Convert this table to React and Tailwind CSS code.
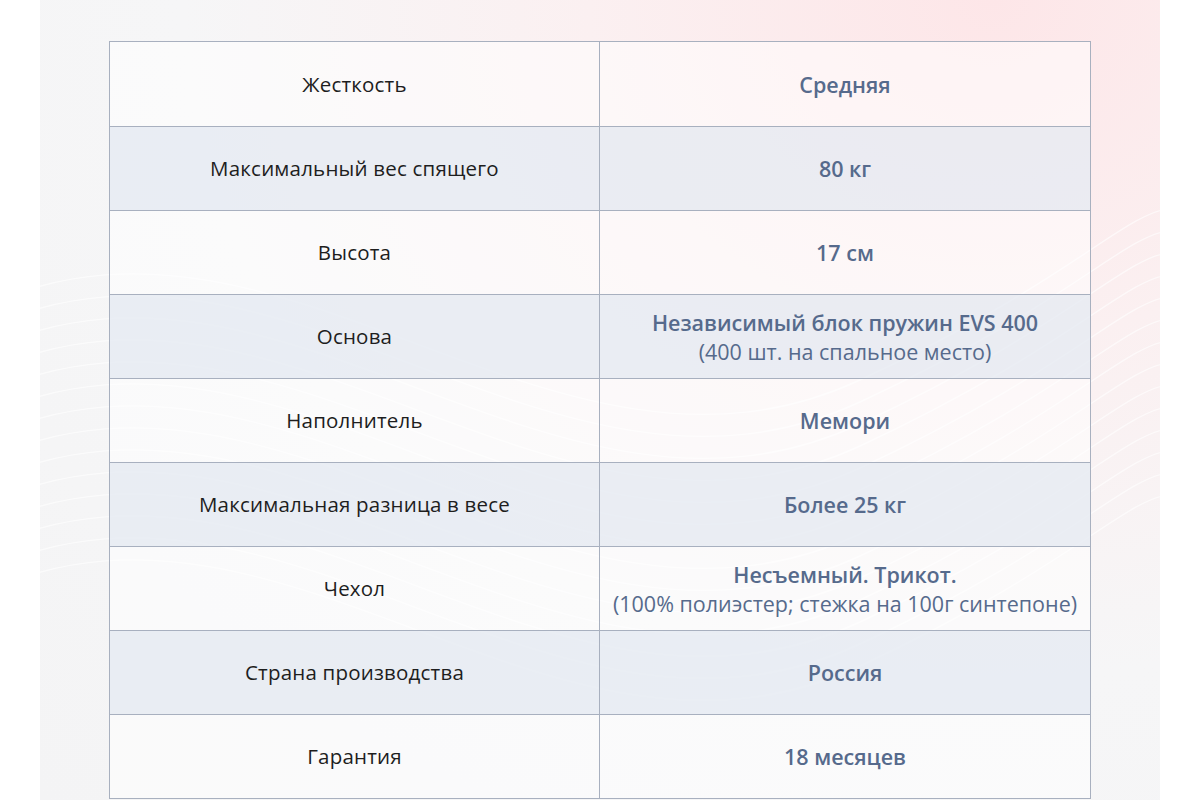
import React from 'react';

const rows = [
  { label: 'Жесткость', value: 'Средняя' },
  { label: 'Максимальный вес спящего', value: '80 кг' },
  { label: 'Высота', value: '17 см' },
  { label: 'Основа', value: 'Независимый блок пружин EVS 400', note: '(400 шт. на спальное место)' },
  { label: 'Наполнитель', value: 'Мемори' },
  { label: 'Максимальная разница в весе', value: 'Более 25 кг' },
  { label: 'Чехол', value: 'Несъемный. Трикот.', note: '(100% полиэстер; стежка на 100г синтепоне)' },
  { label: 'Страна производства', value: 'Россия' },
  { label: 'Гарантия', value: '18 месяцев' },
];

function Waves() {
  const lines = [];
  for (let i = 0; i < 14; i++) {
    const o = i * 22;
    lines.push(
      <path
        key={i}
        d={`M -40 ${300 + o} C 250 ${180 + o}, 520 ${520 + o}, 820 ${380 + o} S 1100 ${160 + o}, 1200 ${240 + o}`}
        fill="none"
        stroke="#ffffff"
        strokeWidth="1.4"
        strokeOpacity="0.6"
      />
    );
  }
  return (
    <svg className="absolute inset-0 w-full h-full" viewBox="0 0 1120 800" preserveAspectRatio="none">
      {lines}
    </svg>
  );
}

function App() {
  return (
    <div className="w-full h-[800px] bg-white px-[40px] font-['Open_Sans','Noto_Sans',sans-serif]">
      <div className="relative h-full overflow-hidden bg-[radial-gradient(ellipse_at_85%_0%,#fde6e8_0%,#fbf0f1_30%,#f6f6f7_60%,#f4f4f5_100%)]">
        <Waves />
        <div className="relative pt-[41px] pl-[69px]">
          <div className="w-[982px] border border-[#a8b0bf]">
            {rows.map((row, i) => (
              <div
                key={row.label}
                className={`grid grid-cols-2 h-[84px] ${i > 0 ? 'border-t border-[#a8b0bf]' : ''} ${i % 2 === 1 ? 'bg-[#e6ebf3]/80' : 'bg-white/50'}`}
              >
                <div className="flex items-center justify-center border-r border-[#a8b0bf] text-[20.5px] tracking-[0.2px] text-[#1e1e1e] text-center">
                  {row.label}
                </div>
                <div className="flex flex-col items-center justify-center text-[21.5px] text-[#566a8c] text-center leading-[29px]">
                  <span className="font-semibold">{row.value}</span>
                  {row.note && <span>{row.note}</span>}
                </div>
              </div>
            ))}
          </div>
        </div>
      </div>
    </div>
  );
}

export default App;
